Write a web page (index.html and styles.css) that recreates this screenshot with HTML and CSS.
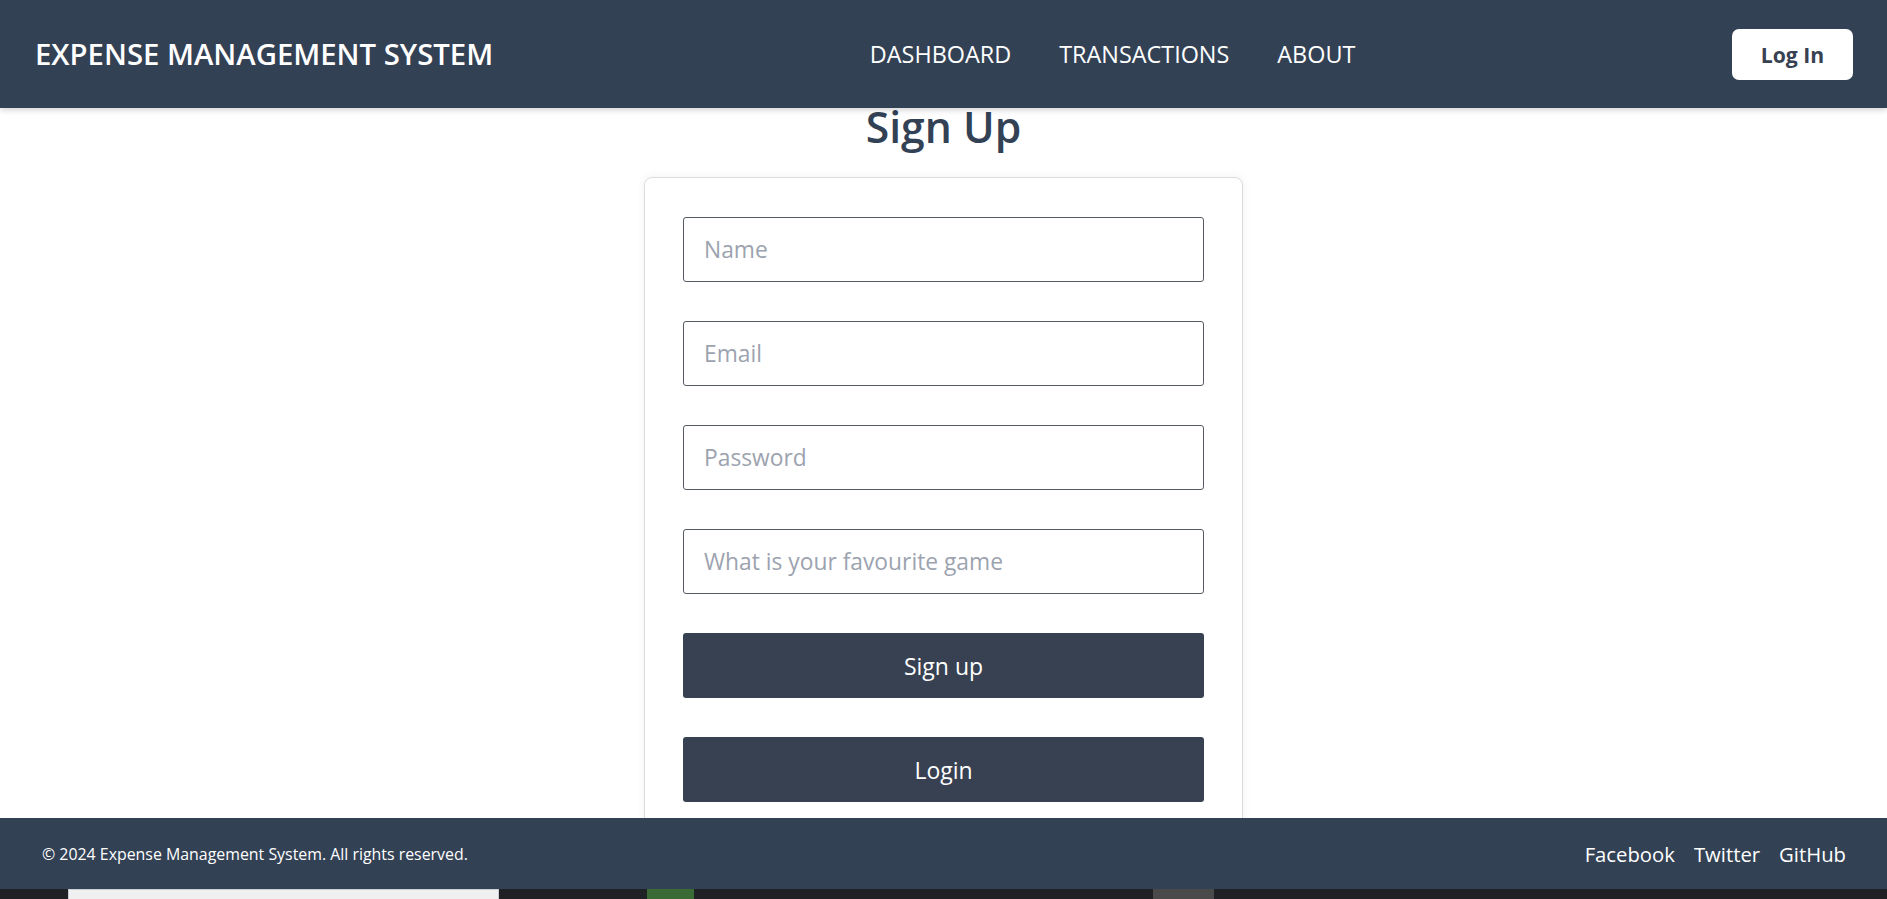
FILE: index.html
```html
<!DOCTYPE html>
<html lang="en">
<head>
<meta charset="utf-8">
<title>Expense Management System - Sign Up</title>
<link rel="stylesheet" href="styles.css">
</head>
<body>
<header class="topbar">
  <div class="brand">EXPENSE MANAGEMENT SYSTEM</div>
  <nav class="nav">
    <a class="nav-link" href="#">DASHBOARD</a>
    <a class="nav-link" href="#">TRANSACTIONS</a>
    <a class="nav-link" href="#">ABOUT</a>
  </nav>
  <button class="login-btn" type="button">Log In</button>
</header>
<main class="content">
  <h1 class="page-title">Sign Up</h1>
  <div class="card">
    <form class="form">
      <input class="field" type="text" placeholder="Name">
      <input class="field" type="email" placeholder="Email">
      <input class="field" type="password" placeholder="Password">
      <input class="field" type="text" placeholder="What is your favourite game">
      <button class="btn" type="button">Sign up</button>
      <button class="btn" type="button">Login</button>
    </form>
  </div>
</main>
<footer class="footer">
  <div class="copy">© 2024 Expense Management System. All rights reserved.</div>
  <div class="social">
    <a href="#">Facebook</a>
    <a href="#">Twitter</a>
    <a href="#">GitHub</a>
  </div>
</footer>
<div class="taskbar">
  <span class="tb-window"></span>
  <span class="tb-green"></span>
  <span class="tb-grey"></span>
</div>
</body>
</html>
```
FILE: styles.css
```css
* { box-sizing: border-box; }
html, body { height: 100%; }
body {
  margin: 0;
  height: 100vh;
  overflow: hidden;
  display: flex;
  flex-direction: column;
  font-family: "Open Sans", "Noto Sans", sans-serif;
  background: #ffffff;
  color: #334155;
}
.topbar {
  position: relative;
  z-index: 2;
  flex: 0 0 108px;
  height: 108px;
  display: flex;
  align-items: center;
  justify-content: space-between;
  padding: 0 34px 0 35px;
  background: #334155;
  box-shadow: 0 2px 6px rgba(0,0,0,0.18);
}
.brand {
  color: #ffffff;
  font-size: 29.3px;
  font-weight: 600;
}
.nav { display: flex; gap: 48px; }
.nav-link {
  color: #ffffff;
  text-decoration: none;
  font-size: 23.4px;
  font-weight: 400;
}
.login-btn {
  width: 121px;
  height: 51px;
  border: none;
  border-radius: 7px;
  background: #ffffff;
  color: #374151;
  font-family: inherit;
  font-size: 21.2px;
  font-weight: 700;
}
.content {
  flex: 1 1 auto;
  min-height: 0;
  overflow: hidden;
  display: flex;
  flex-direction: column;
  align-items: center;
}
.page-title {
  flex: 0 0 auto;
  margin: 0;
  padding-top: 2px;
  font-size: 42.7px;
  font-weight: 600;
  line-height: 34px;
  height: 69px;
  color: #334155;
}
.card {
  flex: 0 0 auto;
  width: 599px;
  border: 1px solid #dcdcdc;
  border-radius: 8px;
  padding: 39px 38px 39px 38px;
  background: #fff;
  box-shadow: 0 0 10px rgba(0,0,0,0.06);
}
.form { display: flex; flex-direction: column; gap: 39px; }
.field {
  width: 521px;
  height: 65px;
  border: 1px solid #555a63;
  border-radius: 3px;
  padding: 0 20px;
  font-family: inherit;
  font-size: 22.8px;
  color: #334155;
  background: #fff;
}
.field::placeholder { color: #9ca3af; }
.btn {
  width: 521px;
  height: 65px;
  border: none;
  border-radius: 3px;
  background: #374151;
  color: #ffffff;
  font-family: inherit;
  font-size: 23px;
}
.footer {
  position: relative;
  z-index: 2;
  flex: 0 0 71px;
  height: 71px;
  display: flex;
  align-items: center;
  justify-content: space-between;
  padding: 0 41px 0 42px;
  background: #334155;
  color: #ffffff;
}
.copy { font-size: 15.9px; }
.social { display: flex; gap: 19px; }
.social a { color: #ffffff; text-decoration: none; font-size: 20.3px; }
.taskbar {
  flex: 0 0 10px;
  height: 10px;
  display: flex;
  align-items: stretch;
  background: #202124;
}
.tb-window {
  width: 431px;
  margin-left: 68px;
  background: #f0f0f0;
  border: 1px solid #c9ced6;
  border-bottom: none;
}
.tb-green { width: 47px; margin-left: 148px; background: #3a6b35; }
.tb-grey { width: 61px; margin-left: 459px; background: #4a4a4a; }
```
